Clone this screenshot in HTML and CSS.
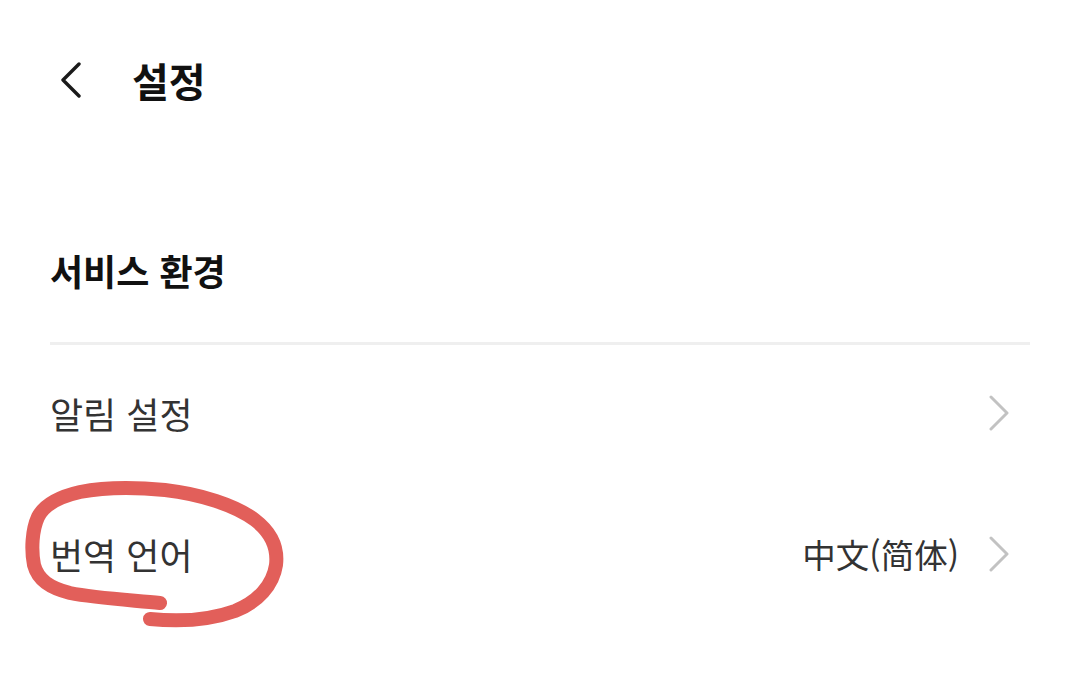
FILE: index.html
```html
<!DOCTYPE html>
<html lang="ko">
<head>
<meta charset="utf-8">
<link rel="stylesheet" href="styles.css">
</head>
<body>
<div class="page">
  <header class="topbar">
    <span class="back">
      <svg width="22" height="36" viewBox="0 0 22 36"><path d="M19 2 L3 18 L19 34" fill="none" stroke="#1a1a1a" stroke-width="3.4" stroke-linecap="round" stroke-linejoin="round"/></svg>
    </span>
    <h1 class="title">설정</h1>
  </header>
  <section class="section">
    <h2 class="section-title">서비스 환경</h2>
    <div class="divider"></div>
    <div class="row">
      <span class="row-label">알림 설정</span>
      <span class="row-right">
        <svg class="chev" width="22" height="36" viewBox="0 0 22 36"><path d="M3 2 L19 18 L3 34" fill="none" stroke="#c2c2c2" stroke-width="3" stroke-linecap="round" stroke-linejoin="round"/></svg>
      </span>
    </div>
    <div class="row">
      <span class="row-label">번역 언어</span>
      <span class="row-right">
        <span class="row-value">中文(简体)</span>
        <svg class="chev" width="22" height="36" viewBox="0 0 22 36"><path d="M3 2 L19 18 L3 34" fill="none" stroke="#c2c2c2" stroke-width="3" stroke-linecap="round" stroke-linejoin="round"/></svg>
      </span>
    </div>
  </section>
  <svg class="scribble" width="300" height="170" viewBox="0 470 300 170">
    <path d="M160 603 C130 600 95 598 70 593 C50 588 38 580 34 565 C31 550 32 530 38 517 C44 505 58 497 80 492 C105 487 135 487 165 490 C200 494 235 505 255 520 C272 533 278 548 276 565 C273 585 258 602 235 611 C210 620 180 622 150 619" fill="none" stroke="#e25f5a" stroke-width="14" stroke-linecap="round" stroke-linejoin="round"/>
  </svg>
</div>
</body>
</html>
```
FILE: styles.css
```css
html, body {
  margin: 0;
  padding: 0;
  background: #ffffff;
}
body {
  font-family: "Noto Sans CJK KR", "Noto Sans CJK SC", "Noto Sans", sans-serif;
  color: #111;
}
.page {
  position: relative;
  width: 1080px;
  height: 683px;
  overflow: hidden;
}
.topbar {
  display: flex;
  align-items: center;
  height: 80px;
  padding: 40px 0 0 60px;
}
.back {
  display: flex;
  width: 22px;
  height: 36px;
}
.title {
  margin: 0 0 0 50px;
  font-size: 40px;
  font-weight: 700;
  line-height: 1;
  color: #111;
}
.section {
  padding: 0 50px;
}
.section-title {
  margin: 132px 0 0;
  font-size: 36px;
  font-weight: 700;
  line-height: 1;
  color: #111;
  height: 40px;
}
.divider {
  margin-top: 50px;
  height: 3px;
  background: #efefef;
}
.row {
  display: flex;
  align-items: center;
  justify-content: space-between;
  height: 135px;
  padding-bottom: 6px;
}
.row-label {
  font-size: 36px;
  color: #333;
  line-height: 1;
}
.row-right {
  display: flex;
  align-items: center;
  gap: 29px;
  padding-right: 20px;
}
.row-value {
  font-size: 33.5px;
  color: #333;
  line-height: 1;
}
.chev {
  display: block;
}
.scribble {
  position: absolute;
  left: 0;
  top: 470px;
}
```
